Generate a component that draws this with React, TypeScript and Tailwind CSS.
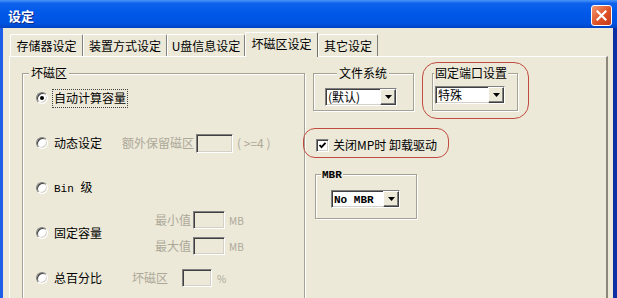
import type { ReactNode } from "react";

const sunken =
  "border border-t-[#808080] border-l-[#808080] border-b-white border-r-white shadow-[inset_1px_1px_0_#404040,inset_-1px_-1px_0_#d4d0c8]";
const mono = "font-['Liberation_Mono',monospace] font-bold text-[11px]";
const dim = "text-[#aca899]";

function Radio({ checked = false }: { checked?: boolean }) {
  return (
    <span className={`flex h-[12px] w-[12px] shrink-0 items-center justify-center rounded-full bg-white ${sunken}`}>
      {checked ? <span className="h-[4px] w-[4px] rounded-full bg-black" /> : null}
    </span>
  );
}

function Checkbox() {
  return (
    <span className={`flex h-[13px] w-[13px] shrink-0 items-center justify-center bg-white ${sunken}`}>
      <svg width="9" height="9" viewBox="0 0 9 9">
        <polyline points="1.5,4 3.5,6.2 7.5,1.8" fill="none" stroke="#000" strokeWidth="1.8" />
      </svg>
    </span>
  );
}

function TextBox({ className }: { className: string }) {
  return <span className={`block bg-[#ece9d8] ${sunken} ${className}`} />;
}

function Combo({ className, children }: { className: string; children: ReactNode }) {
  return (
    <div className={`flex h-[18px] items-center bg-white ${sunken} ${className}`}>
      <span className="flex-1 whitespace-nowrap pl-[2px] leading-[16px]">{children}</span>
      <span className="flex h-full w-[16px] items-center justify-center border border-t-white border-l-white border-b-[#404040] border-r-[#404040] bg-[#ece9d8] shadow-[inset_-1px_-1px_0_#808080]">
        <svg width="7" height="4" viewBox="0 0 7 4">
          <path d="M0 0h7L3.5 4z" fill="#000" />
        </svg>
      </span>
    </div>
  );
}

function Group({
  legend,
  className,
  legendClass,
  children,
}: {
  legend: ReactNode;
  className: string;
  legendClass: string;
  children: ReactNode;
}) {
  return (
    <fieldset className={`border border-[#a5a293] shadow-[inset_1px_1px_0_#fff,1px_1px_0_#fff] ${className}`}>
      <legend className={`bg-[#ece9d8] leading-[14px] ${legendClass}`}>{legend}</legend>
      {children}
    </fieldset>
  );
}

const tabs = [
  { label: "存储器设定", w: "w-[73px]" },
  { label: "装置方式设定", w: "w-[84px]" },
  { label: "U盘信息设定", w: "w-[78px]" },
  { label: "坏磁区设定", w: "w-[73px]", active: true },
  { label: "其它设定", w: "w-[60px]" },
];

export default function App() {
  return (
    <div className="flex h-[298px] w-[617px] flex-col overflow-hidden font-['Noto_Sans_CJK_SC','Noto_Sans',sans-serif] text-[12px] text-black">
      {/* title bar */}
      <div className="flex h-[28px] shrink-0 items-start justify-between bg-[linear-gradient(180deg,#4a95f7_0%,#0d61ec_12%,#0058e8_50%,#0052e0_85%,#0043c4_100%)] pl-[8px] pr-[5px] pt-[5px]">
        <span className="text-[13px] font-bold leading-[21px] text-white [text-shadow:1px_1px_0_#0b2a86]">设定</span>
        <span className="flex h-[21px] w-[21px] items-center justify-center rounded-[3px] border border-white bg-[linear-gradient(135deg,#f39874,#df5226_55%,#c5391a)]">
          <svg width="11" height="11" viewBox="0 0 11 11">
            <path d="M1.5 1.5l8 8M9.5 1.5l-8 8" stroke="#fff" strokeWidth="2.2" strokeLinecap="square" />
          </svg>
        </span>
      </div>

      <div className="flex flex-1 flex-col border-l-[3px] border-r-[4px] border-l-[#1f5ee6] border-r-[#0c2fa6] bg-[#ece9d8]">
        {/* tabs */}
        <div className="flex h-[28px] shrink-0 items-end pl-[7px]">
          {tabs.map((tab) =>
            tab.active ? (
              <div
                key={tab.label}
                className={`relative z-10 -mb-[1px] flex h-[25px] items-start justify-center rounded-t-[2px] border-l border-r border-t border-l-white border-r-[#716f64] border-t-white bg-[#ece9d8] pt-[4px] leading-[14px] ${tab.w}`}
              >
                {tab.label}
              </div>
            ) : (
              <div
                key={tab.label}
                className={`flex h-[22px] items-center justify-center rounded-t-[2px] border-l border-r border-t border-l-white border-r-[#808080] border-t-white leading-[14px] ${tab.w}`}
              >
                {tab.label}
              </div>
            )
          )}
        </div>

        {/* panel */}
        <div className="ml-[6px] mr-[5px] flex flex-1 gap-[8px] border-l border-r-2 border-t border-l-white border-r-[#8b887b] border-t-white pl-[12px] pt-[9px]">
          <Group legend="坏磁区" className="w-[283px] shrink-0 pb-[40px]" legendClass="ml-[6px] px-[2px]">
            <div className="flex flex-col gap-[25px] pt-[8px]">
              <div className="flex h-[20px] items-center pl-[13px]">
                <Radio checked />
                <span className="ml-[4px] flex h-[19px] items-center border border-dotted border-[#444] px-[1px]">
                  自动计算容量
                </span>
              </div>

              <div className="flex h-[20px] items-center pl-[13px]">
                <Radio />
                <span className="ml-[6px] w-[68px]">动态设定</span>
                <span className={dim}>额外保留磁区</span>
                <TextBox className="ml-[2px] h-[19px] w-[37px]" />
                <span className={`ml-[4px] ${dim}`}>( &gt;=4 )</span>
              </div>

              <div className="flex h-[20px] items-center pl-[13px]">
                <Radio />
                <span className="ml-[6px]">
                  <span className="font-['Liberation_Mono',monospace] text-[11px]">Bin </span>级
                </span>
              </div>

              <div className="flex h-[20px] items-center pl-[13px]">
                <Radio />
                <span className="ml-[6px] w-[101px]">固定容量</span>
                <div className="flex flex-col gap-[8px]">
                  <div className="flex h-[18px] items-center">
                    <span className={dim}>最小值</span>
                    <TextBox className="ml-[2px] h-[18px] w-[32px]" />
                    <span className={`ml-[4px] text-[10px] ${dim}`}>MB</span>
                  </div>
                  <div className="flex h-[18px] items-center">
                    <span className={dim}>最大值</span>
                    <TextBox className="ml-[2px] h-[18px] w-[32px]" />
                    <span className={`ml-[4px] text-[10px] ${dim}`}>MB</span>
                  </div>
                </div>
              </div>

              <div className="flex h-[20px] items-center pl-[13px]">
                <Radio />
                <span className="ml-[6px] w-[78px]">总百分比</span>
                <span className={dim}>坏磁区</span>
                <TextBox className="ml-[14px] h-[18px] w-[30px]" />
                <span className={`ml-[5px] text-[10px] ${dim}`}>%</span>
              </div>
            </div>
          </Group>

          <div className="flex shrink-0 flex-col">
            <div className="flex gap-[18px]">
              <Group legend="文件系统" className="w-[101px] pb-[4px]" legendClass="ml-[23px] px-[2px]">
                <Combo className="ml-[11px] mt-[8px] w-[72px]">(默认)</Combo>
              </Group>
              <div className="relative flex">
                <Group legend="固定端口设置" className="w-[86px] pb-[4px]" legendClass="ml-[1px] px-[1px]">
                  <Combo className="ml-[2px] mt-[6px] w-[70px]">特殊</Combo>
                </Group>
                <span className="absolute -bottom-[8px] -left-[10px] -right-[11px] -top-[4px] rounded-[15px] border border-[#c24b3f]" />
              </div>
            </div>

            <div className="relative mt-[24px] flex h-[20px] items-center pl-[3px]">
              <Checkbox />
              <span className="ml-[4px]">关闭MP时 卸载驱动</span>
              <span className="absolute -left-[10px] -top-[7px] h-[30px] w-[146px] rounded-[12px] border border-[#c24b3f]" />
            </div>

            <Group legend={<span className={mono}>MBR</span>} className="ml-[2px] mt-[11px] w-[102px] pb-[10px]" legendClass="ml-[5px] px-[1px]">
              <Combo className="ml-[15px] mt-[8px] w-[69px]">
                <span className={mono}>No MBR</span>
              </Combo>
            </Group>
          </div>
        </div>
      </div>
    </div>
  );
}
